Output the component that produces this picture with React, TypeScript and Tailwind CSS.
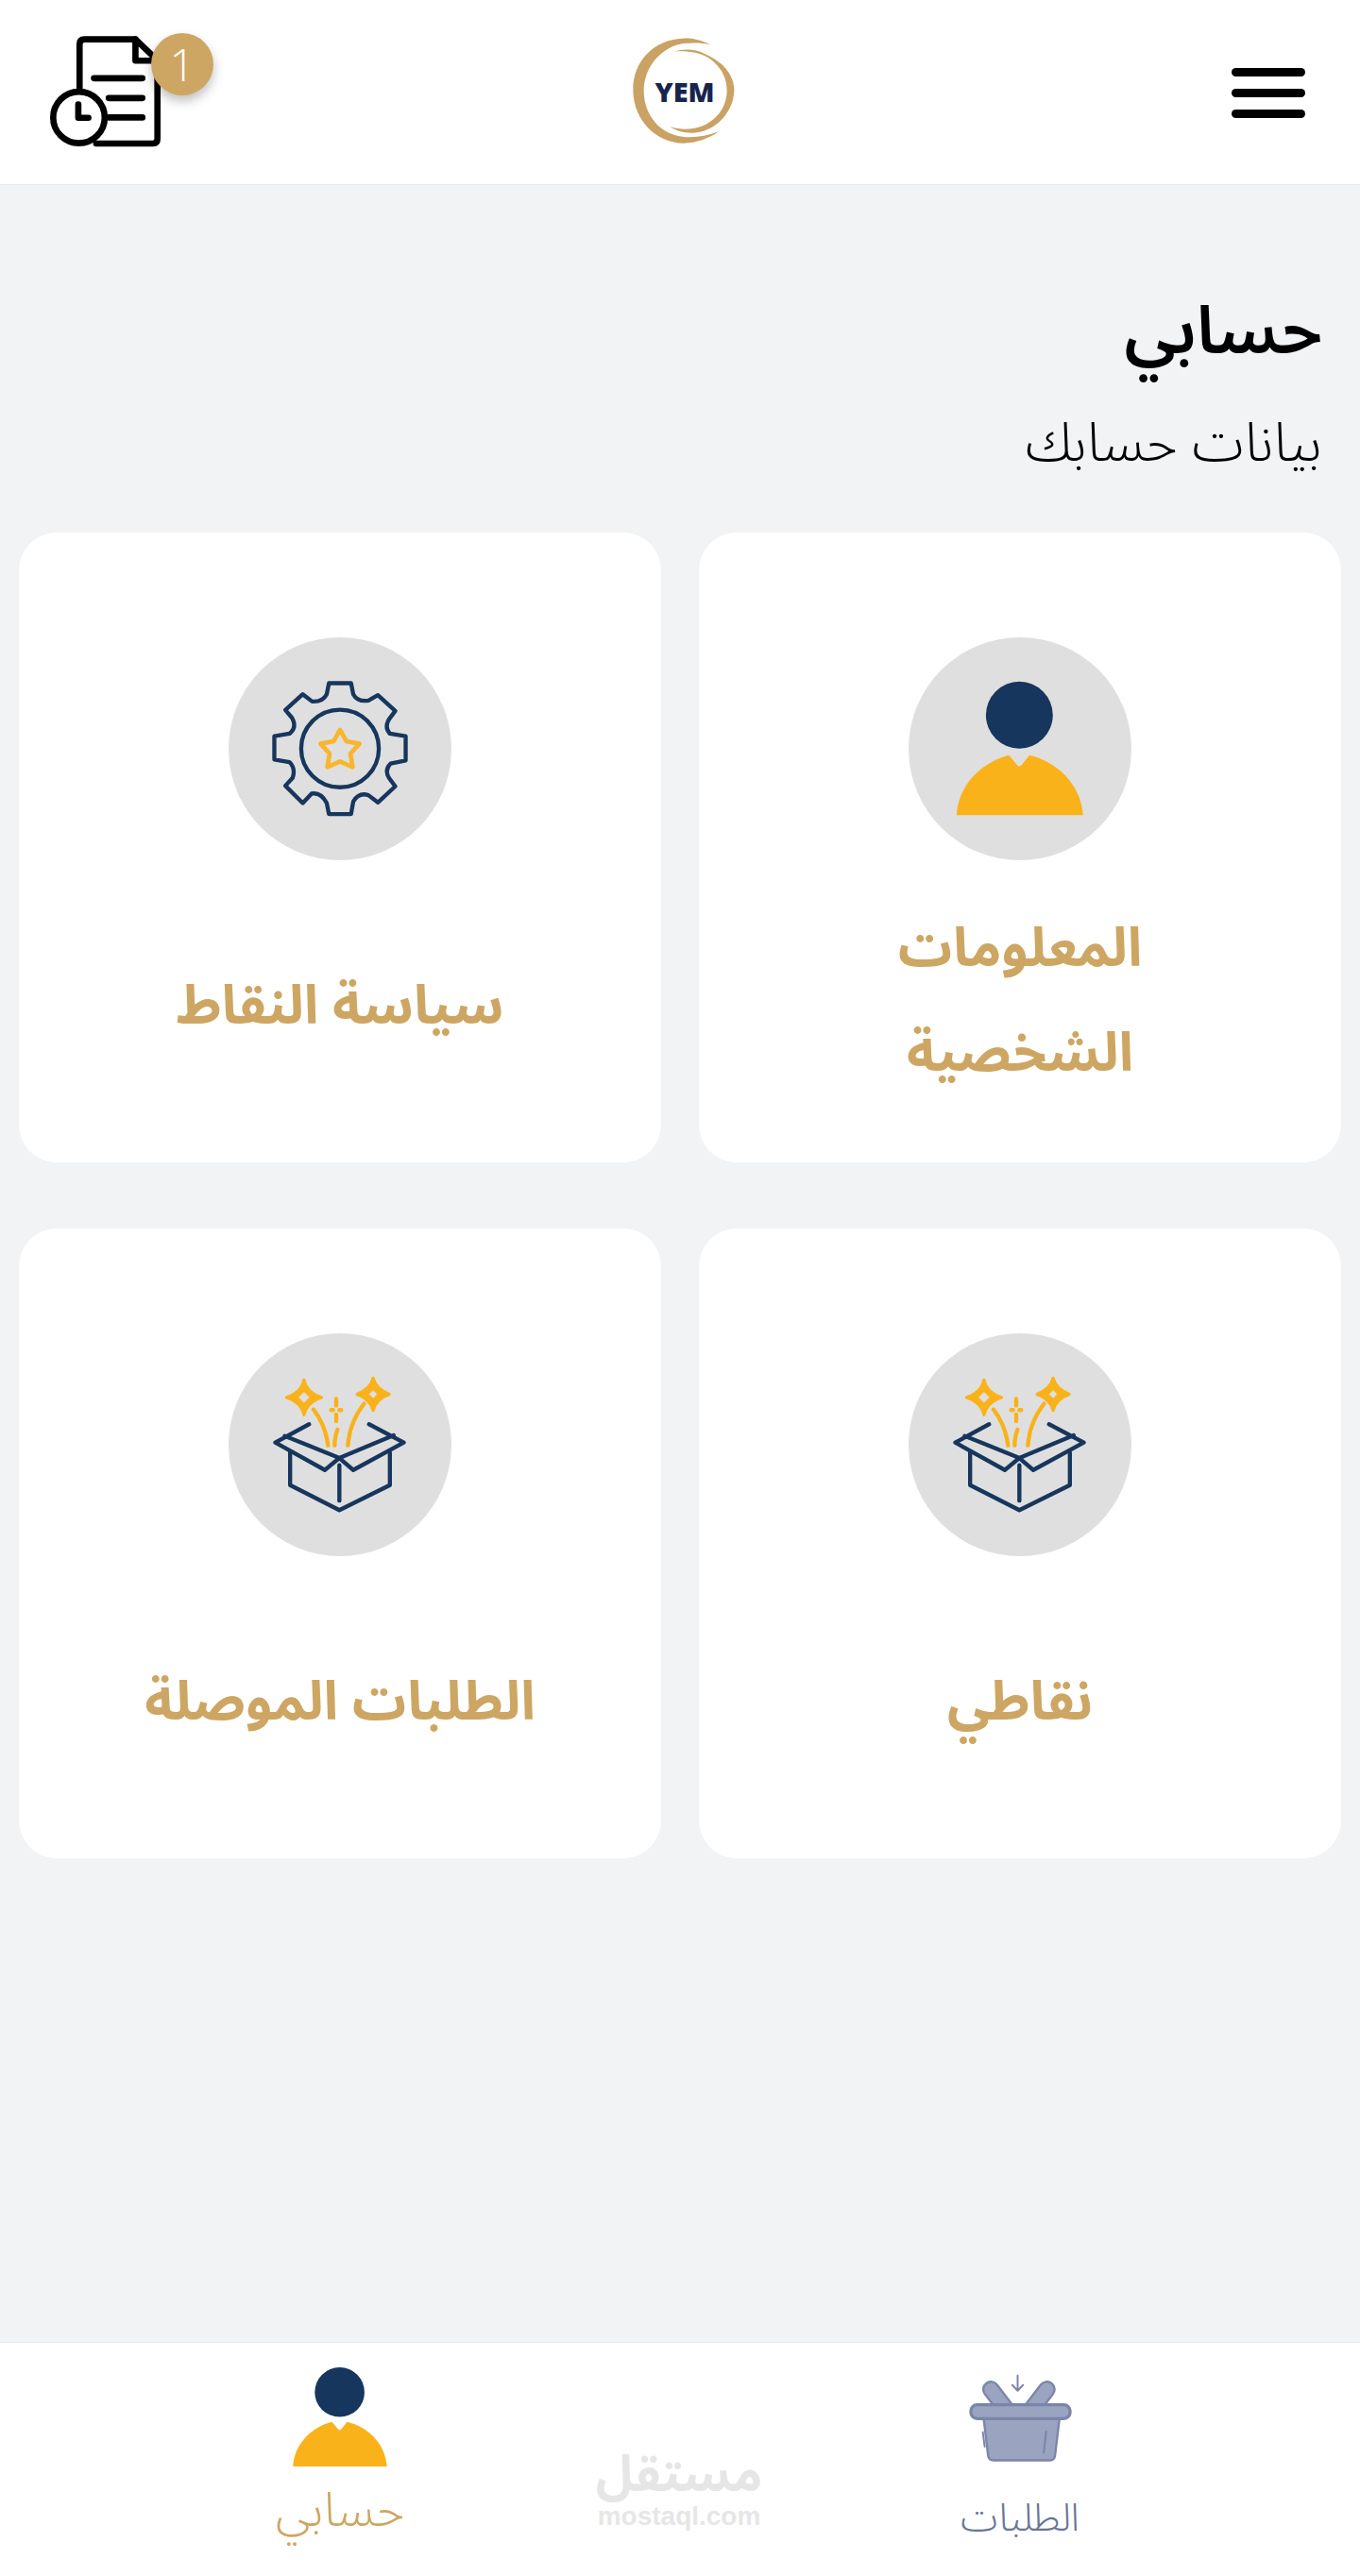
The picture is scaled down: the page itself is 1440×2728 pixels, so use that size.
const NAVY = "#17365d";
const YEL = "#f9b21a";
const F = "font-['Noto_Sans_Arabic','DejaVu_Sans',sans-serif]";

function PersonShapes() {
  return (
    <>
      <circle cx="418" cy="291" r="106" fill={NAVY} />
      <path d="M219 608 C225 510 300 440 385 418 L412 450 Q418 456 424 450 L450 418 C540 440 612 510 620 608 Z" fill={YEL} />
    </>
  );
}

function Person() {
  return (
    <svg viewBox="67 45 706 706" className="w-[236px] h-[236px]">
      <PersonShapes />
    </svg>
  );
}

function Gear() {
  return (
    <svg viewBox="67 45 706 706" className="w-[236px] h-[236px]">
      <path
        d="M378 225 L385 190 H455 L462 225 Q475 250 510 245 L540 228 L595 278 L575 305 Q560 330 578 350 L628 358 V435 L580 445 Q560 465 575 490 L595 517 L540 568 L510 545 Q480 535 462 565 L455 605 H385 L378 570 Q360 535 330 540 L302 570 L247 515 L270 490 Q280 460 260 440 L212 432 V358 L260 350 Q285 330 268 300 L247 275 L302 225 L332 248 Q365 250 378 225 Z"
        fill="none"
        stroke={NAVY}
        strokeWidth="13"
        strokeLinejoin="round"
      />
      <circle cx="420" cy="397" r="123" fill="none" stroke={NAVY} strokeWidth="13" />
      <path
        d="M420 338 L440 374 L482 382 L453 413 L460 456 L420 438 L380 456 L387 413 L358 382 L400 374 Z"
        fill="none"
        stroke="#f9b52c"
        strokeWidth="14"
        strokeLinejoin="round"
      />
    </svg>
  );
}

function Sparkle({ x, y, r, h }: { x: number; y: number; r: number; h: number }) {
  return (
    <>
      <path
        d={`M${x} ${y - r} Q${x + 8} ${y - 16} ${x + r} ${y} Q${x + 8} ${y + 16} ${x} ${y + r} Q${x - 8} ${y + 16} ${x - r} ${y} Q${x - 8} ${y - 16} ${x} ${y - r} Z`}
        fill={YEL}
        stroke={YEL}
        strokeWidth="10"
        strokeLinejoin="round"
      />
      <path d={`M${x} ${y - h} L${x + h} ${y} L${x} ${y + h} L${x - h} ${y} Z`} fill="#dfdfdf" />
    </>
  );
}

function Box() {
  return (
    <svg viewBox="67 37 706 706" className="w-[236px] h-[236px]">
      <Sparkle x={306} y={240} r={55} h={17} />
      <Sparkle x={525} y={230} r={51} h={13} />
      <g fill="none" stroke={YEL} strokeWidth="13" strokeLinecap="round">
        <path d="M336 278 Q375 330 382 392" />
        <path d="M496 260 Q450 320 445 392" />
        <path d="M412 342 Q403 365 403 392" />
        <path d="M408 245 V266 M408 294 V315 M392 280 H398 M418 280 H424" />
      </g>
      <g fill="none" stroke={NAVY} strokeWidth="13" strokeLinecap="round" strokeLinejoin="round">
        <path d="M322 325 L215 383 L372 470 L418 432 L245 362" />
        <path d="M512 325 L622 383 L462 470 L418 432 L590 360" />
        <path d="M262 415 V518 L418 597 L578 518 V415" />
        <path d="M418 455 V567" />
      </g>
    </svg>
  );
}

function Basket() {
  return (
    <svg viewBox="130 60 340 300" className="w-[113px] h-[100px]">
      <g strokeLinecap="round">
        <path d="M206 118 L255 182" stroke="#7b85a8" strokeWidth="56" />
        <path d="M384 118 L335 182" stroke="#7b85a8" strokeWidth="56" />
        <path d="M206 118 L255 182" stroke="#9aa3c0" strokeWidth="42" />
        <path d="M384 118 L335 182" stroke="#9aa3c0" strokeWidth="42" />
      </g>
      <path d="M182 205 L197 330 Q199 344 214 344 H394 Q408 344 410 330 L425 205 Z" fill="#9aa3c0" stroke="#7b85a8" strokeWidth="7" />
      <rect x="142" y="167" width="316" height="44" rx="20" fill="#9aa3c0" stroke="#7b85a8" strokeWidth="10" />
      <g fill="none" stroke="#7b85a8" strokeWidth="6" strokeLinecap="round" strokeLinejoin="round">
        <path d="M291 74 V122 M274 104 L291 122 L308 104" />
        <path d="M382 252 L374 320" />
        <path d="M180 254 L186 300" />
      </g>
    </svg>
  );
}

function DocClock() {
  return (
    <svg viewBox="0 0 440 400" className="w-[147px] h-[133px]" fill="none" stroke="#000" strokeLinecap="round" strokeLinejoin="round">
      <g transform="translate(-30 -30)" strokeWidth="20">
        <path d="M162 225 V84 Q162 68 178 68 H340 L410 135 V385 Q410 400 395 400 H215" />
        <path d="M340 68 V136 H410" />
        <path d="M208 192 H362 M255 255 H362 M255 317 H362" />
        <circle cx="160" cy="317" r="82" />
        <path d="M158 275 V318 H190" />
      </g>
    </svg>
  );
}

function Logo() {
  return (
    <div className="relative w-[112px] h-[112px]">
      <svg viewBox="60 40 336 336" className="w-[112px] h-[112px]">
        <path d="M310 62 C270 42 240 40 222 42 C130 45 62 115 64 208 C66 305 140 375 225 375 C265 375 305 360 336 338 C300 352 260 358 225 355 C150 348 98 285 98 208 C98 130 160 65 225 58 C255 55 285 56 310 62 Z" fill="#c9a264" />
        <path d="M195 84 C225 75 260 75 290 90 C350 115 386 160 385 208 C384 275 325 340 255 342 C225 343 200 335 180 322 C205 330 230 332 255 328 C320 318 362 265 362 208 C362 150 320 100 265 88 C240 83 215 82 195 84 Z" fill="#c9a264" />
      </svg>
      <span className="absolute inset-0 flex items-center justify-center pt-[2px] text-[29px] leading-none font-extrabold text-[#17244c] font-['Open_Sans',sans-serif]">
        YEM
      </span>
    </div>
  );
}

function Card({ icon, lines }: { icon: React.ReactNode; lines: string[] }) {
  return (
    <div className="bg-white rounded-[40px] h-[667px] flex flex-col items-center pt-[111px]">
      <div className="w-[236px] h-[236px] rounded-full bg-[#dfdfdf] flex items-center justify-center">{icon}</div>
      <div className={`flex-1 flex flex-col items-center justify-center ${lines.length === 1 ? "pt-[10px]" : ""} pb-[20px]`}>
        {lines.map((l) => (
          <div key={l} className="text-[57px] leading-[111px] font-bold text-[#cda663]">
            {l}
          </div>
        ))}
      </div>
    </div>
  );
}

export default function App() {
  return (
    <div dir="rtl" className={`w-[1440px] h-[2728px] flex flex-col bg-[#f1f3f5] ${F}`}>
      <header dir="ltr" className="h-[196px] bg-white border-b border-[#e8eaec] grid grid-cols-3 items-center">
        <div className="relative pl-[40px] -mt-[4px] justify-self-start">
          <DocClock />
          <div className="absolute left-[160px] top-[6px] w-[66px] h-[66px] rounded-full bg-[#cda663] text-white flex items-center justify-center text-[48px] font-light leading-none shadow-[0_6px_12px_rgba(0,0,0,0.25)] font-['Open_Sans',sans-serif]">
            1
          </div>
        </div>
        <div className="justify-self-center -mt-[4px] ml-[10px]">
          <Logo />
        </div>
        <div className="justify-self-end pr-[58px] flex flex-col gap-[13px] mt-[2px]">
          <div className="w-[78px] h-[9px] rounded-full bg-black" />
          <div className="w-[78px] h-[9px] rounded-full bg-black" />
          <div className="w-[78px] h-[9px] rounded-full bg-black" />
        </div>
      </header>

      <main className="flex-1">
        <div className="px-[40px] pt-[105px]">
          <h1 className="text-[71px] leading-[100px] font-semibold text-black">حسابي</h1>
          <p className="text-[57px] leading-[100px] mt-[19px] font-light text-black">بيانات حسابك</p>
        </div>
        <div className="grid grid-cols-2 gap-x-[40px] gap-y-[70px] px-[20px] mt-[44px]">
          <Card icon={<Person />} lines={["المعلومات", "الشخصية"]} />
          <Card icon={<Gear />} lines={["سياسة النقاط"]} />
          <Card icon={<Box />} lines={["نقاطي"]} />
          <Card icon={<Box />} lines={["الطلبات الموصلة"]} />
        </div>
      </main>

      <nav className="relative h-[248px] bg-white border-t border-[#e6e8ea] grid grid-cols-2">
        <div className="flex flex-col items-center pt-[30px]">
          <Basket />
          <div className="text-[41px] leading-[60px] mt-[26px] font-light text-[#6a7596]">الطلبات</div>
        </div>
        <div className="flex flex-col items-center pt-[26px]">
          <svg viewBox="219 185 401 423" className="w-[100px] h-[105px]">
            <PersonShapes />
          </svg>
          <div className="text-[51px] leading-[60px] mt-[17px] font-light text-[#cda663]">حسابي</div>
        </div>
        <div className="absolute left-[630px] top-[110px] w-[178px] flex flex-col items-center text-[#e6e6e6] font-bold">
          <div className="text-[53px] leading-[60px]">مستقل</div>
          <div dir="ltr" className="text-[28px] leading-[28px] font-['Liberation_Sans',sans-serif]">mostaql.com</div>
        </div>
      </nav>
    </div>
  );
}
